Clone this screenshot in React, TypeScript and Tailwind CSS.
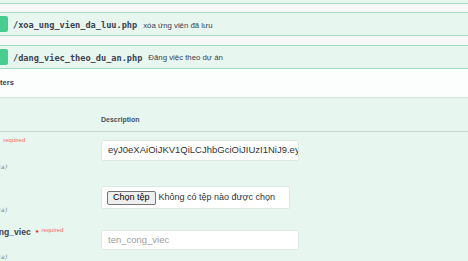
export default function App() {
  return (
    <div className="w-[468px] h-[261px] overflow-hidden bg-[#f8f8f8] font-['Liberation_Sans',Arial,sans-serif] text-[#3b4151]">
      <div className="-ml-[38px] w-[560px]">
        {/* tail of the previous operation */}
        <div className="h-[4px] bg-[#e7f6ef] border-b border-[#a3dcc3]" />

        {/* collapsed operation */}
        <div className="mt-[8px] bg-[#e7f6ef] border border-[#a3dcc3]">
          <div className="h-[22px] flex items-center px-[3px]">
            <span className="w-[42px] h-[16px] bg-[#49cc90] rounded-[2px] shrink-0" />
            <span className="pl-[5px] pt-[3px] font-['DejaVu_Sans_Mono',monospace] font-bold text-[8.6px] leading-none">
              /xoa_ung_vien_da_luu.php
            </span>
            <span className="pl-[6px] pt-[3px] text-[7.8px] leading-none text-[#3b4151]">xóa ứng viên đã lưu</span>
          </div>
        </div>

        {/* expanded operation */}
        <div className="mt-[9px] bg-[#e7f6ef] border border-[#a3dcc3] h-[240px]">
          <div className="h-[23px] flex items-center px-[3px] border-b border-[#a3dcc3]">
            <span className="w-[42px] h-[16px] bg-[#49cc90] rounded-[2px] shrink-0" />
            <span className="pl-[5px] pt-[2px] font-['DejaVu_Sans_Mono',monospace] font-bold text-[8.6px] leading-none">
              /dang_viec_theo_du_an.php
            </span>
            <span className="pl-[6px] pt-[2px] text-[7.8px] leading-none text-[#3b4151]">Đăng việc theo dự án</span>
          </div>

          <div className="h-[28px] flex items-center pl-[10px] bg-[#fbfefd] shadow-[0_1px_1px_rgba(0,0,0,0.06)]">
            <span className="font-bold text-[7.5px]">Parameters</span>
          </div>

          <div className="px-[11px]">
            <div className="flex h-[35px] items-end pb-[7px] border-b border-[#c9d6d0]">
              <div className="w-[127px] font-bold text-[7px] leading-[9px]">Name</div>
              <div className="font-bold text-[7px] leading-[9px] text-[#4a5262]">Description</div>
            </div>

            <div className="flex h-[45px]">
              <div className="w-[127px] pt-[4px]">
                <div className="-ml-[4px] leading-[12px] text-[8.6px] font-bold whitespace-nowrap">
                  token<span className="text-[#ff0000] pl-[1px]">*</span>
                  <span className="relative -top-[3px] pl-[6px] text-[6px] font-normal text-[#ff6666]">required</span>
                </div>
                <div className="leading-[12px] text-[6px] font-['DejaVu_Sans_Mono',monospace]">string</div>
                <div className="-ml-[2px] leading-[11px] text-[6px] italic text-[#7d8290] font-['DejaVu_Sans_Mono',monospace]">(formData)</div>
              </div>
              <div className="pt-[8px]">
                <div className="w-[198px] h-[21px] bg-white border border-[#e0e8e4] rounded-[2px] flex items-center pl-[6px] overflow-hidden whitespace-nowrap text-[9.5px] text-[#333]">
                  eyJ0eXAiOiJKV1QiLCJhbGciOiJIUzI1NiJ9.eyJpZCI6MTIz
                </div>
              </div>
            </div>

            <div className="flex h-[45px]">
              <div className="w-[127px] pt-[3px]">
                <div className="leading-[12px] text-[8.6px] font-bold">file</div>
                <div className="leading-[12px] text-[6px] font-['DejaVu_Sans_Mono',monospace]">file</div>
                <div className="-ml-[2px] leading-[11px] text-[6px] italic text-[#7d8290] font-['DejaVu_Sans_Mono',monospace]">(formData)</div>
              </div>
              <div className="pt-[9px]">
                <div className="w-[189px] h-[23px] bg-white border border-[#e0e8e4] rounded-[2px] flex items-center pl-[5px] whitespace-nowrap text-[9px] text-[#333]">
                  <span className="h-[14px] px-[5px] flex items-center bg-[#efefef] border border-[#767676] rounded-[2px] text-black">Chọn tệp</span>
                  <span className="pl-[3px]">Không có tệp nào được chọn</span>
                </div>
              </div>
            </div>

            <div className="flex h-[45px]">
              <div className="w-[127px] pt-[4px]">
                <div className="-ml-[3px] leading-[12px] text-[8.6px] font-bold whitespace-nowrap">
                  ten_cong_viec<span className="text-[#ff0000] pl-[5px] text-[7px]">*</span>
                  <span className="relative -top-[3px] pl-[3px] text-[6px] font-normal text-[#ff6666]">required</span>
                </div>
                <div className="leading-[12px] text-[6px] font-['DejaVu_Sans_Mono',monospace]">string</div>
                <div className="-ml-[2px] leading-[11px] text-[6px] italic text-[#7d8290] font-['DejaVu_Sans_Mono',monospace]">(formData)</div>
              </div>
              <div className="pt-[8px]">
                <div className="w-[198px] h-[20px] bg-white border border-[#e0e8e4] rounded-[2px] flex items-center pl-[6px] text-[9.5px] text-[#a0a0a0]">
                  ten_cong_viec
                </div>
              </div>
            </div>
          </div>
        </div>
      </div>
    </div>
  )
}
